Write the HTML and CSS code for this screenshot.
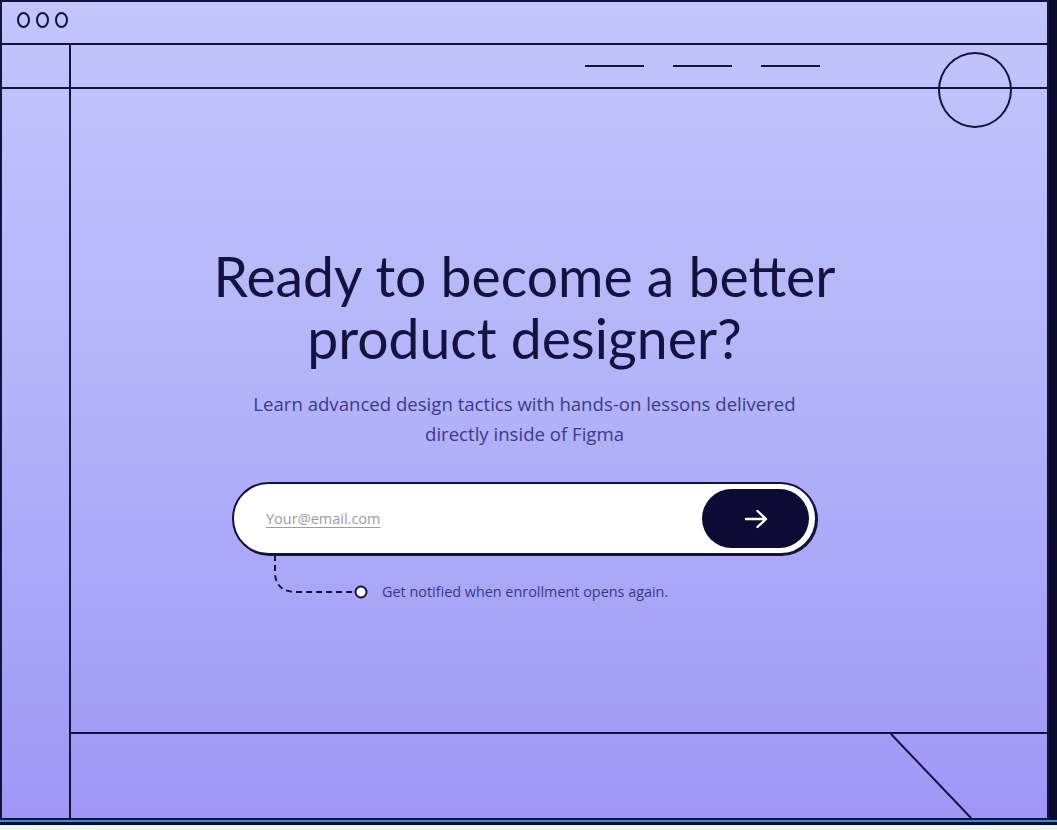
FILE: index.html
```html
<!DOCTYPE html>
<html lang="en">
<head>
<meta charset="utf-8">
<title>Ready to become a better product designer?</title>
<link rel="stylesheet" href="styles.css">
</head>
<body>
<div class="page">
  <div class="frame">
    <header class="topbar">
      <span class="dot"></span><span class="dot"></span><span class="dot"></span>
    </header>
    <nav class="navrow">
      <span class="dash"></span><span class="dash"></span><span class="dash"></span>
      <span class="avatar"></span>
    </nav>
    <aside class="sidebar"></aside>
    <main class="hero">
      <h1 class="title">Ready to become a better<br>product designer?</h1>
      <p class="lead">Learn advanced design tactics with hands-on lessons delivered<br>directly inside of Figma</p>
      <form class="signup" onsubmit="return false">
        <div class="field">
          <span class="placeholder">Your@email.com</span>
          <button class="go" type="submit" aria-label="Submit">
            <svg width="24" height="20" viewBox="0 0 24 20" fill="none" stroke="#ffffff" stroke-width="2.4" stroke-linecap="round" stroke-linejoin="round"><path d="M2 10H22M13.5 2L22 10L13.5 18"/></svg>
          </button>
        </div>
        <div class="note">
          <svg class="connector" width="96" height="44" viewBox="0 0 96 44" fill="none">
            <path d="M2 0V17Q2 37 24 37H82" stroke="#14123e" stroke-width="2" stroke-dasharray="6 4"/>
            <circle cx="88" cy="37" r="5.5" fill="#ffffff" stroke="#14123e" stroke-width="2"/>
          </svg>
          <span class="note-text">Get notified when enrollment opens again.</span>
        </div>
      </form>
    </main>
    <footer class="footer">
      <svg class="diag" width="976" height="84" viewBox="0 0 976 84"><path d="M820 0L900 84" stroke="#14123e" stroke-width="2"/></svg>
    </footer>
  </div>
  <div class="stripe"></div>
</div>
</body>
</html>
```
FILE: styles.css
```css
* { box-sizing: border-box; }
html, body { margin: 0; padding: 0; }
body {
  background: #e8f6ea;
  font-family: "Lato", "Noto Sans", sans-serif;
}
.page {
  width: 1057px;
  height: 825px;
  background: #0a0a2c;
}
.frame {
  width: 1049px;
  height: 820px;
  border: 2px solid #14123e;
  background: linear-gradient(180deg, #c2c6fb 0%, #b3b5f9 45%, #9f97f6 100%);
  display: grid;
  grid-template-columns: 69px 1fr;
  grid-template-rows: 43px 44px 1fr 86px;
}
.stripe {
  height: 2px;
  background: #2f8fd8;
}
.topbar {
  grid-column: 1 / -1;
  grid-row: 1;
  border-bottom: 2px solid #14123e;
  display: flex;
  gap: 6px;
  padding: 10px 0 0 15px;
}
.dot {
  width: 13px;
  height: 16px;
  border: 2px solid #14123e;
  border-radius: 50%;
}
.navrow {
  grid-column: 1 / -1;
  grid-row: 2;
  border-bottom: 2px solid #14123e;
  display: flex;
  justify-content: flex-end;
  align-items: center;
  gap: 29px;
  padding-right: 227px;
  position: relative;
}
.dash {
  width: 59px;
  height: 2px;
  background: #14123e;
}
.avatar {
  position: absolute;
  right: 35px;
  top: 7px;
  width: 74px;
  height: 76px;
  border: 2px solid #14123e;
  border-radius: 50%;
}
.sidebar {
  grid-column: 1;
  grid-row: 2 / -1;
  border-right: 2px solid #14123e;
}
.hero {
  grid-column: 1 / -1;
  grid-row: 3;
  text-align: center;
  padding-top: 156px;
  display: flex;
  flex-direction: column;
  align-items: center;
}
.title {
  margin: 0;
  font-family: "Lato", sans-serif;
  font-weight: 400;
  font-size: 55.3px;
  line-height: 62px;
  color: #14123e;
}
.lead {
  margin: 20px 0 0;
  font-family: "Open Sans", "Noto Sans", sans-serif;
  font-size: 18.6px;
  line-height: 30px;
  color: #3d3a8a;
}
.signup {
  width: 585px;
  margin: 33px 0 0;
  text-align: left;
}
.field {
  height: 73px;
  border: 2px solid #14123e;
  border-radius: 999px;
  background: #ffffff;
  display: flex;
  align-items: center;
  justify-content: space-between;
  padding: 5px 6px 5px 32px;
  box-shadow: 1px 1px 0 #14123e;
}
.placeholder {
  font-family: "Open Sans", "Noto Sans", sans-serif;
  font-size: 14.5px;
  color: #9b9aa6;
  text-decoration: underline;
  text-underline-offset: 3px;
}
.go {
  width: 107px;
  height: 59px;
  border: 0;
  border-radius: 999px;
  background: #0d0b35;
  display: flex;
  align-items: center;
  justify-content: center;
  padding: 0;
  cursor: pointer;
}
.note {
  display: flex;
  align-items: flex-end;
  gap: 13px;
  padding-left: 41px;
}
.connector { display: block; }
.note-text {
  font-family: "Open Sans", "Noto Sans", sans-serif;
  font-size: 14.4px;
  line-height: 14px;
  color: #3b3880;
}
.footer {
  grid-column: 2;
  grid-row: 4;
  border-top: 2px solid #14123e;
  overflow: hidden;
}
.diag { display: block; }
```
